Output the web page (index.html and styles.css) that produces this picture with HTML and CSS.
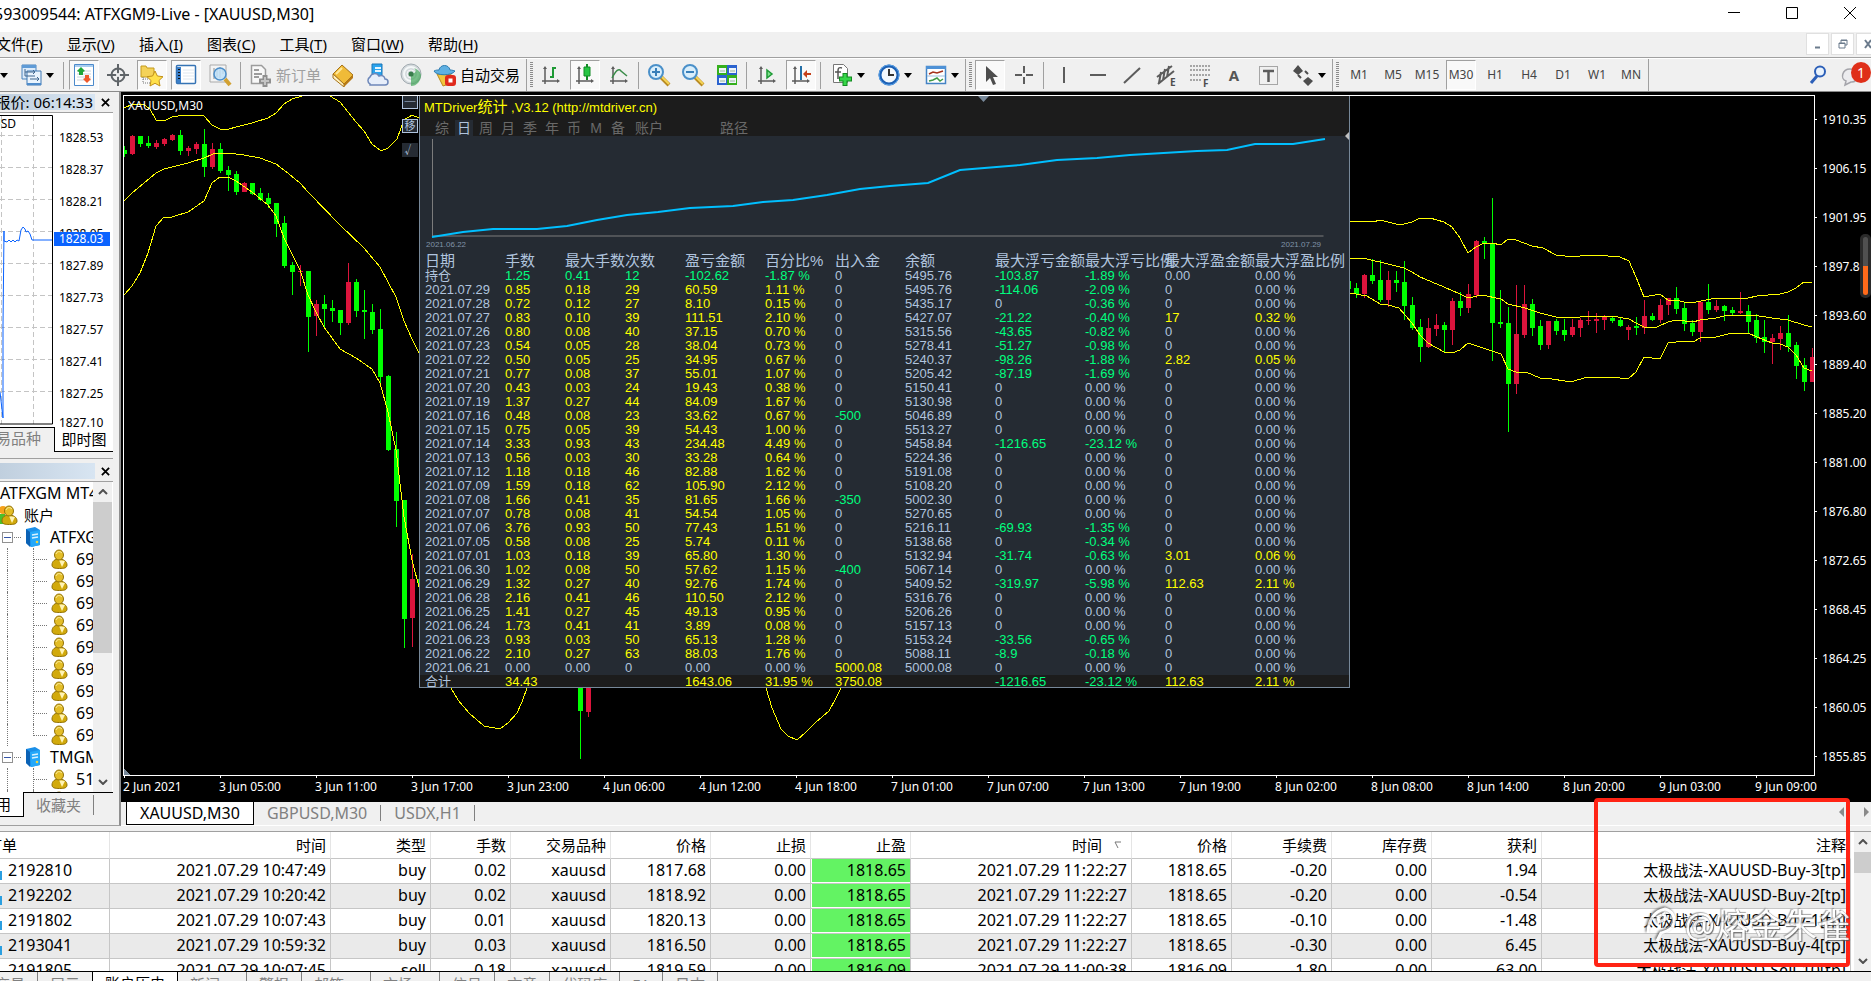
FILE: index.html
```html
<!DOCTYPE html>
<html lang="zh-CN">
<head>
    <meta charset="UTF-8">
    <meta name="viewport" content="width=device-width, initial-scale=1.0">
    <title>ATFXGM9-Live - [XAUUSD,M30]</title>
    <link rel="stylesheet" href="styles.css">
</head>
<body>
    <!-- shared icons -->
    <svg class="defs" aria-hidden="true">
        <symbol id="caret" viewBox="0 0 8 5"><path d="M0 0h8L4 5z"/></symbol>
        <symbol id="axes" viewBox="0 0 24 24">
            <path d="M6 5v16M3 18h16" stroke="#5c5c5c" stroke-width="1.500" fill="none"/>
            <path d="M4 6l2-3 2 3zM18 16l3 2-3 2z" fill="#5c5c5c"/>
        </symbol>
        <symbol id="user" viewBox="0 0 17 20">
            <path d="M1 16c0-4 3-6 7-6s8 2 8 6c0 3-3 3.500-7.500 3.500S1 19 1 16z" fill="#d2aa0b" stroke="#927207"/>
            <path d="M8 11l3 7 3-6z" fill="#fff3b5"/>
            <ellipse cx="8" cy="6" rx="4.500" ry="5" fill="#e3bd27" stroke="#927207"/>
            <path d="M5 5c1-3 4-3 6-1" stroke="#fff0a0" fill="none"/>
        </symbol>
        <symbol id="server" viewBox="0 0 16 20">
            <path d="M1 2l9-2 5 3v15l-9 2-5-4z" fill="#1b8fe8"/>
            <path d="M1 2l4 3v15l-4-4z" fill="#0b62b5"/>
            <path d="M5 5l10-2v15l-9 2z" fill="#25a8fa"/>
            <path d="M7 8l6-1M7 11l6-1" stroke="#d9f2ff" stroke-width="1.500"/>
            <circle cx="12" cy="15" r="1.300" fill="#f2d43c"/>
        </symbol>
    </svg>

    <header class="titlebar">
        <h1>593009544: ATFXGM9-Live - [XAUUSD,M30]</h1>
        <div class="window-buttons">
            <button aria-label="最小化"><svg viewBox="0 0 14 14"><path d="M1 6.500h12"/></svg></button>
            <button aria-label="最大化"><svg viewBox="0 0 14 14"><path d="M1.500 1.500h11v11h-11z"/></svg></button>
            <button aria-label="关闭"><svg viewBox="0 0 14 14"><path d="M1 1l12 12M13 1L1 13"/></svg></button>
        </div>
    </header>

    <nav class="menubar">
        <button>文件(<u>F</u>)</button>
        <button>显示(<u>V</u>)</button>
        <button>插入(<u>I</u>)</button>
        <button>图表(<u>C</u>)</button>
        <button>工具(<u>T</u>)</button>
        <button>窗口(<u>W</u>)</button>
        <button>帮助(<u>H</u>)</button>
        <div class="child-buttons">
            <button aria-label="最小化图表"><svg viewBox="0 0 12 12"><path d="M3 9.500h5" stroke-width="2"/></svg></button>
            <button aria-label="还原图表"><svg viewBox="0 0 12 12"><path d="M4 5V2h6v5H8M2 5h6v5H2zM4 2.500h6M2 5.500h6"/></svg></button>
            <button aria-label="关闭图表"><svg viewBox="0 0 12 12"><path d="M3 2l6 8M9 2l-6 8" stroke-width="2"/></svg></button>
        </div>
    </nav>

    <div class="toolbar">
        <div class="group main">
            <button class="only-caret" aria-label="新图表"><svg class="caret"><use href="#caret"/></svg></button>
            <button class="tool drop" aria-label="模板">
                <svg class="icon" viewBox="0 0 24 24"><path d="M3 2h14v14H3z" fill="#dcebfa" stroke="#4b84bd"/><path d="M3 2h14v3H3z" fill="#5f9bd6"/><path d="M8 8h14v14H8z" fill="#eaf4fd" stroke="#3f78b4"/><path d="M8 20h14v2H8z" fill="#4f8ccb"/><path d="M6 6v7h10M11 16h9M18 14l2 2-2 2M6 9h10M14 7l2 2-2 2" fill="none" stroke="#41678e"/></svg>
                <svg class="caret"><use href="#caret"/></svg>
            </button>
            <span class="sep"></span>
            <button class="tool on" aria-label="市场报价"><svg class="icon" viewBox="0 0 24 24"><path d="M2.500 1.500h19v21h-19z" fill="#fff" stroke="#4c8acb"/><path d="M3 2h18v2H3z" fill="#a9cdf0"/><path d="M5 8h14M5 11h14M5 14h14M5 17h14" stroke="#c9d4de"/><path d="M9 4l4 4-2 1v3H7V9L5 8z" fill="#1fa53a"/><path d="M15 20l-4-4 2-1v-3h4v3l2 1z" fill="#f0592a"/></svg></button>
            <button class="tool" aria-label="数据窗口"><svg class="icon" viewBox="0 0 24 24"><circle cx="12" cy="12" r="6.500" fill="none" stroke="#5f6468" stroke-width="2"/><path d="M12 1v22M1 12h22" stroke="#5f6468" stroke-width="2"/><circle cx="12" cy="12" r="2" fill="#efefef"/></svg></button>
            <button class="tool on" aria-label="导航"><svg class="icon" viewBox="0 0 24 24"><path d="M1 3h5l1 2h7v9H1z" fill="#f4d259" stroke="#c39a1d"/><path d="M3 14v6h7M3 16h5" stroke="#777" stroke-dasharray="1 1" fill="none"/><path d="M15 8l2.400 5 5.600.700-4 3.800 1 5.500-5-2.700-5 2.700 1-5.500-4-3.800 5.600-.700z" fill="#ffe04a" stroke="#c1901a"/></svg></button>
            <button class="tool on" aria-label="终端"><svg class="icon" viewBox="0 0 24 24"><rect x="2.500" y="2.500" width="19" height="18" rx="1" fill="#fff" stroke="#3674b5" stroke-width="1.500"/><path d="M3 4h4v16H3z" fill="#3b7fc9"/><path d="M5 6v12" stroke="#111" stroke-width="2" stroke-dasharray="1 2"/><path d="M9 7h11M9 10h11M9 13h11M9 16h11" stroke="#dfe7ee"/></svg></button>
            <button class="tool" aria-label="策略测试"><svg class="icon" viewBox="0 0 24 24"><path d="M2 2h16v17H2z" fill="#f4f4f4" stroke="#aaa"/><path d="M6 16V5M9 14V7M12 15V4M15 11V6" stroke="#8d8d8d"/><circle cx="12" cy="11" r="6" fill="#bfe0f8" fill-opacity=".85" stroke="#4d8fca" stroke-width="1.500"/><path d="M17 16l5 6" stroke="#d2a132" stroke-width="4"/></svg></button>
            <span class="sep"></span>
            <button class="tool text" disabled><svg class="icon" viewBox="0 0 24 24"><path d="M2.500 2.500h10l4 4v14h-14z" fill="#f8f8f8" stroke="#9c9c9c" stroke-width="1.500"/><path d="M5 7h5M5 11h8M5 14h5" stroke="#9c9c9c" stroke-width="2"/><path d="M16 12v12M10 18h12" stroke="#8f8f8f" stroke-width="5"/><path d="M16 14v8M12 18h8" stroke="#c4c4c4" stroke-width="2"/></svg>新订单</button>
            <button class="tool" aria-label="历史数据"><svg class="icon" viewBox="0 0 24 24"><path d="M2 11L11 2l11 10-9 9z" fill="#f0bb38" stroke="#a5721a"/><path d="M2 11l11 10v3L2 15z" fill="#fff0bd" stroke="#a5721a"/><path d="M13 21l9-9v3l-9 9z" fill="#b87a16"/><path d="M5 11l6-6" stroke="#ffe89a" stroke-width="2"/></svg></button>
            <button class="tool" aria-label="云端"><svg class="icon" viewBox="0 0 24 24"><path d="M7 1h10v14H7z" fill="#2aa4ee" stroke="#1b75b5"/><path d="M10 5h6M10 8h6" stroke="#e3f5ff" stroke-width="2"/><path d="M5 21a4 4 0 010-7 5 5 0 019-1 4 4 0 016 3 3 3 0 010 6H5z" fill="#e7eefa" stroke="#6d87b9" stroke-width="1.500"/></svg></button>
            <button class="tool" aria-label="信号"><svg class="icon" viewBox="0 0 24 24"><circle cx="12" cy="11" r="10" fill="#d3d9dc" stroke="#a2abb1"/><circle cx="12" cy="11" r="7" fill="none" stroke="#f4f7f8" stroke-width="2"/><circle cx="12" cy="11" r="4" fill="none" stroke="#f4f7f8"/><path d="M12 11v12c6 0 10-5 10-11-1-4-4-6-7-7 3 3 2 5-3 6z" fill="#43a65a" fill-opacity=".7"/><circle cx="12" cy="11" r="2.500" fill="#3a7d4d"/></svg></button>
            <button class="tool text"><svg class="icon" viewBox="0 0 24 24"><path d="M4 11h14l-2 10-6 2z" fill="#f2c53d" stroke="#bb8a1b"/><path d="M1 8c2 5 18 5 21 0-3-1-4-1-5-1-1-6-10-6-11 0-2 0-3 0-5 1z" fill="#5fb0e2" stroke="#2d7cb1"/><rect x="12" y="12" width="11" height="11" rx="3" fill="#e02a1c"/><path d="M15.500 15.500h4v4h-4z" fill="#fff"/></svg>自动交易</button>
        </div>
        <div class="group">
            <span class="grip"></span>
            <button class="tool" aria-label="柱状图"><svg class="icon" viewBox="0 0 24 24"><use href="#axes"/><path d="M11 14h3V5h3" fill="none" stroke="#1e9a35" stroke-width="2"/></svg></button>
            <button class="tool on" aria-label="阴阳烛"><svg class="icon" viewBox="0 0 24 24"><use href="#axes"/><path d="M14 1v16" stroke="#118a25" stroke-width="2"/><path d="M11 4h6v9h-6z" fill="#25c542" stroke="#118a25"/></svg></button>
            <button class="tool" aria-label="折线图"><svg class="icon" viewBox="0 0 24 24"><use href="#axes"/><path d="M5 15c4-8 7-10 9-7l6 5" fill="none" stroke="#3b8c4a" stroke-width="1.500"/></svg></button>
            <span class="sep"></span>
            <button class="tool" aria-label="放大"><svg class="icon" viewBox="0 0 24 24"><path d="M14 14l8 8" stroke="#b88a22" stroke-width="4"/><path d="M14 13l8 8" stroke="#f6d557" stroke-width="2"/><circle cx="9" cy="9" r="7" fill="#d9eefb" stroke="#4a90c9" stroke-width="2"/><path d="M9 5v8M5 9h8" stroke="#397fb9" stroke-width="2"/></svg></button>
            <button class="tool" aria-label="缩小"><svg class="icon" viewBox="0 0 24 24"><path d="M14 14l8 8" stroke="#b88a22" stroke-width="4"/><path d="M14 13l8 8" stroke="#f6d557" stroke-width="2"/><circle cx="9" cy="9" r="7" fill="#d9eefb" stroke="#4a90c9" stroke-width="2"/><path d="M5 9h8" stroke="#397fb9" stroke-width="2"/></svg></button>
            <button class="tool" aria-label="平铺窗口"><svg class="icon" viewBox="0 0 24 24"><path d="M2 2h10v10H2zM12 12h10v10H12z" fill="#35b01d"/><path d="M12 2h10v10H12zM2 12h10v10H2z" fill="#2b63cf"/><path d="M4 5h7v5H4zM14 5h7v5h-7zM4 15h7v5H4zM14 15h7v5h-7z" fill="#eef5fb"/><path d="M5 8h5M15 8h5M5 18h5M15 18h5" stroke="#9ab59b"/></svg></button>
            <span class="sep"></span>
            <button class="tool" aria-label="自动滚动"><svg class="icon" viewBox="0 0 24 24"><use href="#axes"/><path d="M12 7l5 4-5 4z" fill="#7fe08d" stroke="#1d9a35" stroke-width="1.500"/></svg></button>
            <button class="tool on" aria-label="图表平移"><svg class="icon" viewBox="0 0 24 24"><use href="#axes"/><path d="M12 3v14" stroke="#2470a8" stroke-width="2"/><path d="M14 11l4-4v3h4v2h-4v3z" fill="#c5401a"/></svg></button>
            <span class="sep"></span>
            <button class="tool drop" aria-label="指标"><svg class="icon" viewBox="0 0 24 24"><path d="M3.500 1.500h10l4 4v14h-14z" fill="#fff" stroke="#777"/><path d="M12 5c-3-1-4 0-4 3v8M5 9h6" fill="none" stroke="#555" stroke-width="1.500"/><path d="M15 10v13M9 16h13" stroke="#128a20" stroke-width="5"/><path d="M15 11v11M10 16h11" stroke="#35d648" stroke-width="3"/></svg><svg class="caret"><use href="#caret"/></svg></button>
            <button class="tool drop" aria-label="时段"><svg class="icon" viewBox="0 0 24 24"><circle cx="12" cy="12" r="9" fill="#f3f8fd" stroke="#1c60b4" stroke-width="3"/><circle cx="12" cy="12" r="10" fill="none" stroke="#5aa2e8"/><path d="M12 6v6h5" fill="none" stroke="#333" stroke-width="2"/></svg><svg class="caret"><use href="#caret"/></svg></button>
            <button class="tool drop" aria-label="模版"><svg class="icon" viewBox="0 0 24 24"><path d="M2.500 3.500h19v17h-19z" fill="#fff" stroke="#4483c4" stroke-width="1.500"/><path d="M2 3h20v3H2z" fill="#4e91d6"/><path d="M3 13h18" stroke="#9cbfe0"/><path d="M5 11l4-2 4 1 6-2" fill="none" stroke="#a5321c" stroke-width="1.500"/><path d="M5 18l4-1 4-2 3 3 3-2" fill="none" stroke="#3f9b45" stroke-width="1.500"/></svg><svg class="caret"><use href="#caret"/></svg></button>
        </div>
        <div class="group">
            <span class="grip"></span>
            <button class="tool on" aria-label="光标"><svg class="icon" viewBox="0 0 24 24"><path d="M8 3v16l4-4 3 7 3-1-3-7h5z" fill="#4d4d4d"/></svg></button>
            <button class="tool line" aria-label="十字光标"><svg class="icon" viewBox="0 0 24 24"><path d="M12 3v7M12 14v7M3 12h7M14 12h7"/></svg></button>
            <span class="sep"></span>
            <button class="tool line" aria-label="垂直线"><svg class="icon" viewBox="0 0 24 24"><path d="M12 4v16"/></svg></button>
            <button class="tool line" aria-label="水平线"><svg class="icon" viewBox="0 0 24 24"><path d="M4 12h16"/></svg></button>
            <button class="tool line" aria-label="趋势线"><svg class="icon" viewBox="0 0 24 24"><path d="M4 20L20 5"/></svg></button>
            <button class="tool line" aria-label="等距通道"><svg class="icon" viewBox="0 0 24 24"><path d="M3 14L18 3M4 21L20 8M7 9l-2 11M11 6L9 17M15 3l-2 11"/><text x="16" y="23">E</text></svg></button>
            <button class="tool line" aria-label="斐波那契"><svg class="icon" viewBox="0 0 24 24"><path d="M2 3h20M2 7h20M2 12h20M2 17h11" stroke-dasharray="2 1" stroke-width="1"/><text x="15" y="24">F</text></svg></button>
            <button class="tool letter" aria-label="文字">A</button>
            <button class="tool line" aria-label="文字标签"><svg class="icon" viewBox="0 0 24 24"><path d="M3.500 3.500h18v18h-18z" stroke-dasharray="1 1" stroke-width="1"/><path d="M7 8h11M12.500 8v11" stroke-width="2.500"/></svg></button>
            <button class="tool drop" aria-label="箭头"><svg class="icon" viewBox="0 0 24 24"><path d="M2 8l5-6 5 6-5 4zM12 18l5-4 5 4-5 5z" fill="#4d4d4d"/><path d="M7 12l3 3M14 8l3 3" stroke="#4d4d4d" stroke-width="2"/></svg><svg class="caret"><use href="#caret"/></svg></button>
        </div>
        <div class="group periods">
            <span class="grip"></span>
            <button class="tool">M1</button>
            <button class="tool">M5</button>
            <button class="tool">M15</button>
            <button class="tool on">M30</button>
            <button class="tool">H1</button>
            <button class="tool">H4</button>
            <button class="tool">D1</button>
            <button class="tool">W1</button>
            <button class="tool">MN</button>
        </div>
        <div class="toolbar-right">
            <button aria-label="搜索"><svg width="18" height="20" viewBox="0 0 18 20"><circle cx="11" cy="6.500" r="5" fill="#eaf3fc" stroke="#2c5fb8" stroke-width="2"/><path d="M8 11l-6 7" stroke="#2c5fb8" stroke-width="3"/></svg></button>
            <button class="chat" aria-label="消息"><svg width="26" height="26" viewBox="0 0 26 26"><path d="M9 7c-8 0-10 10-4 12l-1 4 6-3c8 1 10-13-1-13z" fill="#ececef" stroke="#a5a5ab" stroke-width="1.500"/></svg><span class="badge">1</span></button>
        </div>
    </div>

    <main class="workspace">
        <aside class="sidebar">
            <section class="dock watch">
                <header><h2>市场报价: 06:14:33</h2><button aria-label="关闭"><svg viewBox="0 0 10 10"><path d="M1 1l8 8M9 1L1 9"/></svg></button></header>
                <div class="tick">
                    <svg class="tick-chart" viewBox="0 0 54 314" preserveAspectRatio="none">
                        <path d="M1.500 3v308M33.500 3v308M0 22.500h53M0 54.500h53M0 86.500h53M0 118.500h53M0 150.500h53M0 182.500h53M0 214.500h53M0 246.500h53M0 278.500h53" class="grid"/>
                        <path d="M0 2.500h52.500v308.500H0" class="frame"/>
                        <path d="M0 279l3 26V212l1-94v10l3 1 2-2 2 2 2-2 2 2 2-2 2 1 2-11 2-3 2 2 1 3 2-1 2 3 2 6h20" class="price"/>
                        <text x="-8" y="15">USD</text>
                    </svg>
                    <ul class="tick-scale">
                        <li>1828.53</li><li>1828.37</li><li>1828.21</li><li>1828.05</li><li>1827.89</li>
                        <li>1827.73</li><li>1827.57</li><li>1827.41</li><li>1827.25</li><li>1827.10</li>
                    </ul>
                    <span class="tick-now">1828.03</span>
                </div>
                <div class="dock-tabs"><button class="first">交易品种</button><button class="active">即时图</button></div>
            </section>
            <section class="dock navigator">
                <header><h2>&nbsp;</h2><button aria-label="关闭"><svg viewBox="0 0 10 10"><path d="M1 1l8 8M9 1L1 9"/></svg></button></header>
                <div class="tree-box">
                    <ul class="tree">
                        <li>ATFXGM MT4</li>
                        <li class="accounts"><svg width="18" height="20" viewBox="0 0 18 20"><circle cx="3" cy="5" r="4" fill="#f5a21b"/><path d="M0 9h5v10H0z" fill="#4bc02c"/><use href="#user" x="1" width="17" height="20"/></svg>账户</li>
                        <li class="server"><i class="expander"></i><i class="dots"></i><svg width="16" height="20"><use href="#server"/></svg>ATFXG</li>
                        <li class="account"><i class="twig"></i><svg width="17" height="20"><use href="#user"/></svg>69</li>
                        <li class="account"><i class="twig"></i><svg width="17" height="20"><use href="#user"/></svg>69</li>
                        <li class="account"><i class="twig"></i><svg width="17" height="20"><use href="#user"/></svg>69</li>
                        <li class="account"><i class="twig"></i><svg width="17" height="20"><use href="#user"/></svg>69</li>
                        <li class="account"><i class="twig"></i><svg width="17" height="20"><use href="#user"/></svg>69</li>
                        <li class="account"><i class="twig"></i><svg width="17" height="20"><use href="#user"/></svg>69</li>
                        <li class="account"><i class="twig"></i><svg width="17" height="20"><use href="#user"/></svg>69</li>
                        <li class="account"><i class="twig"></i><svg width="17" height="20"><use href="#user"/></svg>69</li>
                        <li class="account"><i class="twig last"></i><svg width="17" height="20"><use href="#user"/></svg>69</li>
                        <li class="server"><i class="expander"></i><i class="dots"></i><svg width="16" height="20"><use href="#server"/></svg>TMGM</li>
                        <li class="account"><i class="twig"></i><svg width="17" height="20"><use href="#user"/></svg>51</li>
                        <li class="account"><i class="twig"></i><svg width="17" height="20"><use href="#user"/></svg></li>
                    </ul>
                    <div class="scrollbar">
                        <svg viewBox="0 0 10 6"><path d="M1 5l4-4 4 4"/></svg>
                        <span class="thumb"></span>
                        <svg viewBox="0 0 10 6"><path d="M1 1l4 4 4-4"/></svg>
                    </div>
                </div>
                <div class="dock-tabs nav-tabs"><button class="active">常用</button><button class="rest"><span>收藏夹</span></button></div>
            </section>
        </aside>

        <section class="charts">
            <div class="chart-window">
                <div class="plot">
                    <svg class="candles" id="candles" viewBox="0 0 1690 679" preserveAspectRatio="none"></svg>
                    <span class="symbol">XAUUSD,M30</span>
                    <div class="panel-buttons">
                        <button class="lit" aria-label="收起">─</button>
                        <button class="lit">移</button>
                        <button>√</button>
                    </div>

                    <div class="stats">
                        <div class="stats-head">
                            <h3>MTDriver<span>统计</span> ,V3.12 (http://mtdriver.cn)</h3>
                            <div class="stats-tabs">
                                <button>综</button><button class="active">日</button><button>周</button><button>月</button><button>季</button><button>年</button><button>币</button><button>M</button><button>备</button><button class="wide">账户</button><button class="path">路径</button>
                            </div>
                        </div>
                        <svg class="equity" viewBox="0 0 929 116" preserveAspectRatio="none">
                            <path d="M12.500 3v97h891" class="axis"/>
                            <path d="M12 101l31-5 30-3h44l30-3 30-6 30-5 31-3 32-4 43-2 30-4 30-2 34-5 33-6 30-3 38-3 32-13 60-5 37-5 40-2 33-3 67-4 30-1 28-6h38l32-5" class="curve"/>
                            <text x="6" y="111">2021.06.22</text>
                            <text x="861" y="111">2021.07.29</text>
                        </svg>
                        <table class="stats-table">
                            <colgroup><col class="w80"><col class="w60"><col class="w60"><col class="w60"><col class="w80"><col class="w70"><col class="w70"><col class="w90"><col class="w90"><col class="w80"><col class="w90"><col></colgroup>
                            <thead>
                                <tr><th>日期</th><th>手数</th><th>最大手数</th><th>次数</th><th>盈亏金额</th><th>百分比%</th><th>出入金</th><th>余额</th><th>最大浮亏金额</th><th>最大浮亏比例</th><th>最大浮盈金额</th><th>最大浮盈比例</th></tr>
                            </thead>
                            <tbody id="stats-rows"></tbody>
                        </table>
                        <svg class="mark-top" viewBox="0 0 11 6"><path d="M0 0h11L5.500 6z"/></svg>
                        <svg class="mark-side" viewBox="0 0 4 8"><path d="M4 0v8L0 4z"/></svg>
                    </div>
                </div>
                <ol class="price-axis">
                    <li>1910.35</li><li>1906.15</li><li>1901.95</li><li>1897.80</li><li>1893.60</li><li>1889.40</li><li>1885.20</li>
                    <li>1881.00</li><li>1876.80</li><li>1872.65</li><li>1868.45</li><li>1864.25</li><li>1860.05</li><li>1855.85</li>
                </ol>
                <ol class="time-axis">
                    <li>2 Jun 2021</li><li>3 Jun 05:00</li><li>3 Jun 11:00</li><li>3 Jun 17:00</li><li>3 Jun 23:00</li><li>4 Jun 06:00</li>
                    <li>4 Jun 12:00</li><li>4 Jun 18:00</li><li>7 Jun 01:00</li><li>7 Jun 07:00</li><li>7 Jun 13:00</li><li>7 Jun 19:00</li>
                    <li>8 Jun 02:00</li><li>8 Jun 08:00</li><li>8 Jun 14:00</li><li>8 Jun 20:00</li><li>9 Jun 03:00</li><li>9 Jun 09:00</li>
                </ol>
                <div class="float-bar"><span></span></div>
            </div>
            <div class="chart-tabs">
                <button class="active">XAUUSD,M30</button>
                <button>GBPUSD,M30</button>
                <button>USDX,H1</button>
                <div class="scroll-tabs">
                    <svg viewBox="0 0 6 10"><path d="M5 0v10L0 5z"/></svg>
                    <svg viewBox="0 0 6 10"><path d="M1 0v10l5-5z"/></svg>
                </div>
            </div>
        </section>
    </main>

    <section class="terminal">
        <table class="orders">
            <colgroup><col class="c-id"><col class="c-time"><col class="c-100"><col class="c-lots"><col class="c-100"><col class="c-100"><col class="c-100"><col class="c-100"><col class="c-time"><col class="c-100"><col class="c-100"><col class="c-100"><col class="c-profit"><col></colgroup>
            <thead>
                <tr><th class="id">订单</th><th>时间</th><th>类型</th><th>手数</th><th>交易品种</th><th>价格</th><th>止损</th><th>止盈</th><th>时间<svg class="sort" viewBox="0 0 8 8"><path d="M7 1H1l3 6"/></svg></th><th>价格</th><th>手续费</th><th>库存费</th><th>获利</th><th>注释</th></tr>
            </thead>
            <tbody id="order-rows"></tbody>
        </table>
        <div class="scrollbar">
            <svg viewBox="0 0 10 6"><path d="M1 5l4-4 4 4"/></svg>
            <span class="thumb"></span>
            <svg viewBox="0 0 10 6"><path d="M1 1l4 4 4-4"/></svg>
        </div>
    </section>

    <nav class="terminal-tabs">
        <button class="cut">交易</button><button>展示</button><button class="active">账户历史</button><button class="count">新闻</button><button>警报</button><button class="count">邮箱</button><button class="count">市场</button><button>信号</button><button>文章</button><button>代码库</button><button>EA</button><button>日志</button>
    </nav>

    <div class="marker"></div>
    <div class="watermark">
        <svg width="30" height="36" viewBox="0 0 30 36"><path d="M2 26C2 14 8 4 19 2c8 2 10 9 9 14-2 8-10 9-13 10l-4 8M12 10l6-3 2 5-7 3z"/></svg>
        @熔金朱雀
    </div>

    <script src="chart.js"></script>
</body>
</html>
```
FILE: styles.css
```css
* {
    box-sizing: border-box;
}
body {
    margin: 0;
    height: 100vh;
    display: flex;
    flex-direction: column;
    overflow: hidden;
    position: relative;
    background: #f0f0f0;
    color: #000;
    font: 15px/20px "Noto Sans", "Noto Sans CJK SC", sans-serif;
}
h1, h2, h3, ul, ol {
    margin: 0;
    padding: 0;
    font-weight: normal;
    list-style: none;
}
button {
    border: 0;
    padding: 0;
    background: none;
    font: inherit;
    color: inherit;
    white-space: nowrap;
}
svg {
    display: block;
    flex: none;
}
.defs {
    position: absolute;
    width: 0;
    height: 0;
}

/* title and menu */
.titlebar {
    flex: 0 0 32px;
    display: flex;
    justify-content: space-between;
    background: #fff;
}
.titlebar h1 {
    margin-left: -6px;
    font-size: 16px;
    line-height: 28px;
}
.window-buttons {
    display: flex;
    gap: 44px;
    padding: 6px 14px 0 0;
}
.window-buttons svg {
    width: 14px;
    height: 14px;
    fill: none;
    stroke: #000;
}
.window-buttons button {
    height: 14px;
}
.menubar {
    flex: 0 0 26px;
    display: flex;
    align-items: center;
    gap: 24px;
    margin-left: -4px;
    padding-bottom: 1px;
    border-bottom: 1px solid #a0a0a0;
}
.menubar u {
    text-underline-offset: 2px;
}
.child-buttons {
    margin-left: auto;
    margin-right: -8px;
    display: flex;
    gap: 2px;
}
.child-buttons button {
    width: 23px;
    height: 22px;
    display: grid;
    place-items: center;
    background: #fff;
    border: 1px solid #e0e0e0;
}
.child-buttons svg {
    width: 12px;
    height: 12px;
    fill: none;
    stroke: #6b7b8c;
}

/* toolbar */
.toolbar {
    flex: 0 0 34px;
    display: flex;
    border-top: 1px solid #fff;
    border-bottom: 1px solid #8a8a8a;
}
.group {
    display: flex;
    align-items: center;
    border-right: 1px solid #a0a0a0;
}
.grip {
    width: 3px;
    height: 26px;
    margin: 0 1px 0 3px;
    background: repeating-linear-gradient(#8c8c8c 0 1px, #f0f0f0 1px 2px);
}
.sep {
    width: 1px;
    height: 27px;
    margin: 0 3px 0 2px;
    background: #a0a0a0;
}
.main {
    padding-right: 1px;
}
.main .sep {
    margin-left: 3px;
}
.tool {
    width: 30px;
    height: 30px;
    margin: 0 2px;
    display: flex;
    align-items: center;
    justify-content: center;
    gap: 3px;
}
.tool.drop {
    width: 43px;
}
.tool.text {
    width: auto;
    padding: 0 3px;
}
.tool:disabled {
    color: #a0a0a0;
}
.tool.on {
    background: #f9f9f9;
    border: 1px solid #fff;
    border-top-color: #a0a0a0;
    border-left-color: #a0a0a0;
}
.icon {
    width: 24px;
    height: 24px;
}
.caret {
    width: 8px;
    height: 5px;
}
.only-caret {
    width: 13px;
}
.line .icon {
    stroke: #5c5c5c;
    stroke-width: 2px;
    fill: none;
}
.line text {
    font-size: 10px;
    font-weight: bold;
    fill: #4d4d4d;
    stroke: none;
}
.letter {
    font-weight: bold;
    color: #555;
}
.periods .grip {
    margin-right: 3px;
}
.periods .tool {
    font-size: 12px;
    color: #444;
}
.toolbar-right {
    margin-left: auto;
    display: flex;
    align-items: center;
    gap: 14px;
}
.chat {
    position: relative;
    width: 30px;
}
.badge {
    position: absolute;
    top: 0;
    right: 0;
    width: 20px;
    height: 21px;
    border-radius: 50%;
    background: #df2f19;
    color: #fff;
    font-size: 14px;
    line-height: 21px;
}

/* left docks */
.workspace {
    flex: 1;
    min-height: 0;
    display: flex;
}
.sidebar {
    flex: 0 0 121px;
    min-width: 0;
    display: flex;
    flex-direction: column;
    margin-bottom: 5px;
    padding-right: 6px;
    border-right: 2px solid #8f8f8f;
    border-bottom: 1px solid #a0a0a0;
}
.dock {
    display: flex;
    flex-direction: column;
    overflow: hidden;
}
.watch {
    flex: 0 0 367px;
    border-bottom: 1px solid #a0a0a0;
}
.navigator {
    flex: 1;
    padding-top: 2px;
}
.dock header {
    flex: 0 0 21px;
    display: flex;
    justify-content: space-between;
    align-items: center;
    padding-right: 3px;
    border-bottom: 1px solid #a0a0a0;
}
.dock header h2 {
    flex: none;
    width: 95px;
    height: 16px;
    display: flex;
    align-items: center;
    justify-content: flex-end;
    padding-right: 2px;
    background: linear-gradient(90deg, #c0cfde, #d8e5f2);
    font-size: 15px;
    white-space: nowrap;
}
.dock header svg {
    width: 9px;
    height: 9px;
    stroke: #000;
    stroke-width: 2px;
}
.tick {
    flex: none;
    height: 314px;
    display: flex;
    position: relative;
    background: #fff;
    font-size: 12px;
}
.tick-chart {
    width: 54px;
    height: 314px;
}
.tick-chart .grid {
    stroke: #c4c4c4;
    stroke-dasharray: 5 3;
}
.tick-chart .frame {
    fill: none;
    stroke: #000;
}
.tick-chart .price {
    fill: none;
    stroke: #0a63ff;
}
.tick-scale {
    padding: 9px 0 0 5px;
}
.tick-scale li {
    height: 32px;
    line-height: 32px;
}
.tick-scale li:last-child {
    height: 17px;
    line-height: 26px;
}
.tick-now {
    position: absolute;
    left: 54px;
    top: 119px;
    width: 56px;
    height: 14px;
    padding-left: 5px;
    background: #0a63ff;
    color: #fff;
    line-height: 14px;
}
.dock-tabs {
    display: flex;
    height: 25px;
}
.dock-tabs button {
    color: #808080;
}
.watch .first {
    flex: none;
    width: 54px;
    border-top: 1px solid #000;
    padding-right: 13px;
    display: flex;
    justify-content: flex-end;
}
.dock-tabs .active {
    background: #fff;
    color: #000;
}
.watch .active {
    flex: 1;
    border-left: 1px solid #000;
    border-bottom: 1px solid #000;
}
.tree-box {
    flex: 1;
    min-height: 0;
    display: flex;
    background: #fff;
}
.tree {
    flex: 1;
    min-width: 0;
    overflow: hidden;
    font-size: 16px;
}
.tree li {
    height: 22px;
    display: flex;
    align-items: center;
    white-space: nowrap;
}
.accounts {
    gap: 6px;
    font-size: 15px;
}
.expander {
    flex: none;
    width: 11px;
    height: 11px;
    margin-left: 2px;
    border: 1px solid #919191;
    background: linear-gradient(#3556a8, #3556a8) 50% 50% / 7px 1px no-repeat;
}
.dots {
    flex: none;
    width: 7px;
    height: 1px;
    margin: 0 4px 0 1px;
    background: repeating-linear-gradient(90deg, #777 0 1px, transparent 1px 2px);
}
.server svg {
    margin-right: 9px;
}
.account {
    margin-left: 7px;
    padding-left: 25px;
    border-left: 1px dotted #777;
}
.twig {
    flex: none;
    width: 15px;
    height: 22px;
    margin-right: 3px;
    border-left: 1px dotted #777;
    background: repeating-linear-gradient(90deg, #777 0 1px, transparent 1px 2px) 0 11px / 100% 1px no-repeat;
}
.twig.last {
    height: 12px;
    align-self: flex-start;
}
.account svg {
    margin-right: 8px;
}
.scrollbar {
    flex: 0 0 19px;
    display: flex;
    flex-direction: column;
    align-items: center;
    padding: 7px 0;
    background: #f0f0f0;
}
.scrollbar svg {
    width: 10px;
    height: 6px;
    fill: none;
    stroke: #505050;
    stroke-width: 2px;
}
.scrollbar .thumb {
    width: 100%;
    height: 151px;
    margin: 7px 0 auto;
    background: #cdcdcd;
}
.tree-box .scrollbar {
    margin-right: 1px;
}
.nav-tabs {
    flex: 0 0 33px;
    padding-bottom: 8px;
}
.nav-tabs .active {
    flex: none;
    width: 24px;
    display: flex;
    justify-content: flex-end;
    align-items: center;
    padding-right: 12px;
    border-right: 1px solid #000;
    border-bottom: 1px solid #000;
}
.nav-tabs .rest {
    flex: 1;
    display: flex;
    align-items: center;
    border-top: 1px solid #000;
}
.nav-tabs .rest span {
    padding: 0 12px;
    border-right: 1px solid #808080;
}

/* chart */
.charts {
    flex: 1;
    min-width: 0;
    display: flex;
    flex-direction: column;
    padding-bottom: 5px;
}
.chart-window {
    flex: 1;
    min-height: 0;
    position: relative;
    display: grid;
    grid-template: minmax(0, 1fr) 24px / minmax(0, 1fr) 56px;
    padding: 3px 0 0 2px;
    background: #000;
    color: #fff;
    font-size: 12px;
}
.plot {
    position: relative;
    overflow: hidden;
    border: 1px solid #fff;
}
.candles {
    width: 100%;
    height: 100%;
    shape-rendering: crispEdges;
}
.bull {
    fill: #dc143c;
}
.bear {
    fill: #00ff00;
}
.band {
    fill: none;
    stroke: #ffff00;
}
.symbol {
    position: absolute;
    left: 4px;
    top: 0;
}
.panel-buttons {
    position: absolute;
    left: 278px;
    top: -1px;
    display: flex;
    flex-direction: column;
    gap: 10px;
}
.panel-buttons button {
    width: 16px;
    height: 14px;
    overflow: hidden;
    background: #252b33;
    border: 1px solid #252b33;
    font-size: 11px;
    line-height: 10px;
    color: #b0c4de;
}
.panel-buttons .lit {
    border-color: #b0c4de;
}
.price-axis {
    height: 0;
}
.price-axis li {
    display: flex;
    align-items: center;
    height: 49px;
    gap: 5px;
}
.price-axis li::before {
    content: "";
    width: 2px;
    height: 1px;
    background: #fff;
}
.time-axis {
    grid-column: 1 / 3;
    display: flex;
    overflow: hidden;
}
.time-axis li {
    flex: 0 0 96px;
    line-height: 18px;
    white-space: nowrap;
}
.time-axis li::before {
    content: "";
    display: block;
    width: 1px;
    height: 2px;
    margin-left: 1px;
    background: #fff;
}
.float-bar {
    position: absolute;
    right: 0;
    top: 142px;
    width: 11px;
    height: 64px;
    padding: 3px;
    border-radius: 5px;
    background: #2b2b2b;
}
.float-bar span {
    display: block;
    height: 58px;
    border-radius: 3px;
    background: linear-gradient(#505050 50%, #ff6a1a 50%);
}

/* statistics overlay */
.stats {
    position: absolute;
    left: 295px;
    top: 0;
    width: 931px;
    height: 592px;
    overflow: hidden;
    background: #252b33;
    border: 1px solid #778899;
    border-top: 0;
    color: #b0c4de;
    font: 13px/14px "Liberation Sans", "Noto Sans CJK SC", sans-serif;
}
.stats-head {
    height: 40px;
    background: #1c1c1c;
}
.stats h3 {
    padding: 1px 0 0 4px;
    font-size: 13px;
    line-height: 20px;
    color: #ffff00;
}
.stats h3 span {
    font-size: 15px;
}
.stats-tabs {
    display: flex;
    padding: 2px 0 0 11px;
}
.stats-tabs button {
    width: 22px;
    height: 16px;
    font-size: 14px;
    line-height: 16px;
    color: #696969;
}
.stats-tabs .active {
    width: 18px;
    margin: 0 2px;
    background: #252b33;
    color: #b0c4de;
}
.stats-tabs .wide {
    width: 34px;
    margin-left: 3px;
}
.stats-tabs .path {
    width: 34px;
    margin-left: 51px;
}
.equity {
    width: 100%;
    height: 116px;
}
.equity .axis {
    fill: none;
    stroke: #7c7c7c;
}
.equity .curve {
    fill: none;
    stroke: #00bfff;
    stroke-width: 2px;
}
.equity text {
    font-size: 8px;
    fill: #8093a8;
}
.stats-table {
    width: 100%;
    table-layout: fixed;
    border-collapse: collapse;
}
.stats-table th,
.stats-table td {
    height: 14px;
    padding: 0 0 0 5px;
    text-align: left;
    vertical-align: middle;
    font-weight: normal;
    line-height: 14px;
    white-space: nowrap;
}
.stats-table th {
    height: 17px;
    font-size: 15px;
    line-height: 17px;
}
.stats-table .gain {
    color: #ffff00;
}
.stats-table .loss {
    color: #00ff7f;
}
.stats-table .total td {
    background: #1c1c1c;
}
.w60 { width: 60px; }
.w70 { width: 70px; }
.w80 { width: 80px; }
.w90 { width: 90px; }
.mark-top {
    position: absolute;
    left: 558px;
    top: 0;
    width: 11px;
    height: 6px;
    fill: #778899;
}
.mark-side {
    position: absolute;
    right: 0;
    top: 36px;
    width: 4px;
    height: 8px;
    fill: #c0c0c0;
}

/* chart tabs */
.chart-tabs {
    flex: 0 0 26px;
    display: flex;
    align-items: stretch;
    padding-left: 5px;
    border-top: 2px solid #000;
    border-bottom: 1px solid #fff;
    font-size: 16px;
}
.chart-tabs button {
    margin: 3px 0 4px;
    padding: 0 13px;
    border-right: 1px solid #808080;
    line-height: 16px;
    color: #808080;
}
.chart-tabs .active {
    margin: 0;
    border: 1px solid #000;
    border-top: 0;
    background: #fff;
    color: #000;
}
.scroll-tabs {
    margin: 5px 2px 0 auto;
    display: flex;
    gap: 18px;
}
.scroll-tabs svg {
    width: 6px;
    height: 10px;
    fill: #8a8a8a;
}

/* order history */
.terminal {
    flex: 0 0 140px;
    display: flex;
    overflow: hidden;
    border-top: 1px solid #a0a0a0;
    background: #fff;
}
.orders {
    flex: 1;
    table-layout: fixed;
    border-collapse: separate;
    border-spacing: 0;
    width: 100%;
    margin-right: 3px;
    align-self: flex-start;
}
.orders th,
.orders td {
    padding: 0 4px;
    text-align: right;
    white-space: nowrap;
    border-right: 1px solid #c6c6c6;
    border-bottom: 1px solid #c6c6c6;
}
.orders th {
    height: 27px;
    font-weight: normal;
    border-right-color: #e5e5e5;
}
.orders td {
    height: 25px;
    font-size: 16px;
    line-height: 22px;
    padding-bottom: 2px;
}
.orders th.id {
    text-align: left;
    text-indent: -17px;
    overflow: hidden;
}
.orders td.id {
    text-align: left;
    padding-left: 8px;
    background: linear-gradient(#2b9fe0, #2b9fe0) 0 80% / 2px 9px no-repeat;
}
.orders tr:nth-child(even) td {
    background-color: #eaeaea;
}
.orders tbody .tp {
    background-color: #63f363;
    box-shadow: inset 1px -1px #fff;
}
.orders tbody tr:nth-child(even) .tp {
    background-color: #63f363;
}
.cn {
    font-size: 15px;
}
.sort {
    display: inline-block;
    width: 8px;
    height: 8px;
    margin: 0 5px 2px 12px;
    fill: none;
    stroke: #777;
}
.c-id { width: 110px; }
.c-time { width: 221px; }
.c-100 { width: 100px; }
.c-lots { width: 80px; }
.c-profit { width: 110px; }
.terminal .scrollbar {
    flex-basis: 17px;
}
.terminal .thumb {
    height: 21px;
}

.terminal-tabs {
    flex: 0 0 10px;
    display: flex;
    align-items: flex-start;
    overflow: hidden;
    border-top: 1px solid #000;
    color: #808080;
}
.terminal-tabs button {
    flex: none;
    height: 24px;
    padding: 0 12px;
    border-right: 1px solid #808080;
    line-height: 20px;
}
.terminal-tabs .cut {
    margin-left: -17px;
}
.terminal-tabs .active {
    margin: -1px 0 0 -1px;
    border-left: 1px solid #000;
    border-right: 1px solid #000;
    background: #fff;
    color: #000;
}
.terminal-tabs .count {
    padding-right: 26px;
}

/* highlight frame and signature */
.marker {
    position: absolute;
    right: 21px;
    bottom: 14px;
    width: 256px;
    height: 169px;
    border: 4px solid #ff2415;
    border-radius: 4px;
}
.watermark {
    position: absolute;
    right: 20px;
    bottom: 36px;
    display: flex;
    align-items: center;
    gap: 8px;
    font-size: 34px;
    line-height: 40px;
    color: #fff;
    text-shadow: 1px 1px 1px #555, -1px -1px 1px #999;
    opacity: 0.85;
}
.watermark svg {
    fill: none;
    stroke: #fff;
    stroke-width: 3px;
    filter: drop-shadow(-1px -1px 1px #555);
}
```
FILE: chart.js
```js
// slot, colour, high, body top, body bottom, low
const candles = [
    [0,'g',50,54,58,61],[1,'r',39,40,58,59],[2,'g',40,40,48,51],[3,'g',40,47,50,52],[4,'r',44,47,51,53],[5,'r',42,43,48,50],
    [6,'r',38,39,44,45],[7,'g',34,39,55,59],[8,'r',50,52,55,60],[9,'r',46,48,53,58],[10,'g',33,48,71,81],[11,'r',47,53,71,73],
    [12,'g',47,53,75,77],[13,'g',70,74,79,95],[14,'g',75,78,96,99],[15,'r',86,87,96,96],[16,'g',87,87,98,99],[17,'g',92,97,104,105],
    [18,'g',97,102,108,112],[19,'g',107,107,128,141],[20,'g',120,127,170,172],[21,'g',166,169,176,199],[22,'r',169,175,176,190],
    [23,'g',175,175,221,256],[24,'r',204,208,220,240],[25,'g',199,208,213,231],[26,'g',204,212,215,226],[27,'g',214,214,227,239],
    [28,'r',167,186,227,229],[29,'g',183,186,215,221],[30,'g',194,214,216,243],[31,'g',208,216,234,238],[32,'g',213,233,281,289],
    [33,'g',279,280,354,355],[34,'g',336,353,405,431],[35,'g',404,404,523,552],[36,'r',458,483,522,551],[37,'g',480,483,487,487],
    [57,'g',560,570,615,663],[58,'r',560,570,616,621],
    [153,'g',185,185,193,193],[154,'g',187,192,198,202],[155,'r',178,179,198,202],[156,'g',163,179,185,188],[157,'g',164,184,204,206],
    [158,'r',175,184,204,211],[159,'g',175,184,187,196],[160,'g',165,186,210,224],[161,'g',201,209,232,234],[162,'g',223,231,251,266],
    [163,'r',222,232,251,252],[164,'r',218,229,233,240],[165,'g',226,229,234,256],[166,'r',202,205,234,249],[167,'g',196,205,212,220],
    [168,'r',188,198,212,217],[169,'r',144,145,199,202],[170,'g',141,145,148,163],[171,'g',102,147,227,265],[172,'g',194,226,228,232],
    [173,'g',211,227,288,336],[174,'r',189,238,288,298],[175,'r',189,208,239,242],[176,'g',203,208,232,240],[177,'g',224,230,249,254],
    [178,'r',225,225,249,253],[179,'g',223,225,235,239],[180,'g',223,234,239,245],[181,'r',223,231,239,241],[182,'r',222,224,232,241],
    [183,'r',215,224,225,229],[184,'r',217,223,225,237],[185,'r',219,221,224,234],[186,'g',220,222,225,227],[187,'g',221,224,230,231],
    [188,'r',229,231,234,244],[189,'g',221,230,232,239],[190,'r',204,220,232,238],[191,'g',217,220,224,225],[192,'r',203,209,224,227],
    [193,'r',202,202,209,219],[194,'g',191,202,213,218],[195,'g',207,212,228,235],[196,'g',224,227,236,240],[197,'r',205,206,236,246],
    [198,'g',188,206,214,218],[199,'r',204,210,214,216],[200,'g',209,210,215,225],[201,'g',211,214,217,220],[202,'r',196,215,217,218],
    [203,'g',209,215,226,237],[204,'g',218,224,242,247],[205,'g',224,241,246,257],[206,'r',238,242,246,268],[207,'r',230,237,243,254],
    [208,'g',219,237,251,256],[209,'g',246,249,270,283],[210,'g',262,269,286,295],[211,'r',252,261,286,286]
];

// Bollinger bands, in the stretches that stay visible
const bands = [
    '0,12 9,8 19,8 26,13 32,24 40,25 48,21 61,19 80,20 88,29 96,33 105,33 112,31 128,27 144,22 152,17 160,8 168,3 178,0',
    '206,0 216,6 224,16 232,26 240,35 248,48 257,55 264,52 273,43 280,24 288,19 295,22',
    '0,105 8,97 32,77 40,73 64,67 80,62 89,58 104,57 120,59 136,62 152,68 160,74 176,87 184,96 216,129 240,152 256,171 272,201 280,225 288,243 295,257',
    '0,199 8,190 16,177 24,157 32,130 40,121 48,121 64,116 80,105 88,87 96,81 104,81 112,85 128,96 144,109 152,120 160,142 176,174 184,199 192,216 200,231 216,253 232,262 248,273 256,287 264,316 272,354 280,421 288,464 295,491',
    '327,592 334,604 345,617 360,630 376,633 384,627 393,617 398,606 403,592',
    '642,592 648,612 657,633 664,640 673,644 682,636 692,626 705,615 712,602 717,592',
    '1226,126 1245,125 1249,126 1256,124 1272,128 1280,128 1288,126 1296,122 1306,122 1320,126 1328,131 1336,142 1344,157 1352,151 1360,147 1368,147 1377,149 1384,143 1392,144 1408,150 1419,152 1432,159 1441,160 1456,160 1472,159 1496,161 1505,165 1512,181 1520,201 1536,198 1544,204 1552,204 1560,206 1572,206 1592,202 1624,202 1633,200 1656,198 1664,196 1672,192 1680,186 1688,186',
    '1226,162 1243,163 1264,168 1280,172 1288,176 1296,181 1320,191 1336,198 1344,202 1358,199 1377,203 1384,208 1401,212 1416,217 1432,221 1448,222 1465,220 1488,220 1505,223 1512,227 1520,231 1533,231 1544,226 1552,224 1569,226 1576,224 1592,222 1600,220 1616,219 1629,219 1648,222 1664,224 1680,229 1688,231',
    '1226,197 1243,200 1256,208 1264,209 1275,212 1288,227 1296,239 1304,247 1320,256 1328,257 1336,254 1344,247 1368,255 1377,258 1384,273 1392,276 1402,276 1416,282 1428,283 1441,285 1450,285 1460,282 1482,281 1496,282 1505,282 1512,276 1520,261 1536,263 1544,247 1560,245 1569,246 1576,242 1592,241 1608,237 1624,237 1633,241 1648,247 1656,248 1664,251 1672,259 1680,272 1688,275'
];

let shapes = '';
candles.forEach(([slot, colour, high, top, bottom, low]) => {
    const x = slot * 8;
    const cls = colour === 'r' ? 'bull' : 'bear';
    shapes += `<rect class="${cls}" x="${x}" y="${high}" width="1" height="${Math.max(low - high, 1)}"/>`;
    shapes += `<rect class="${cls}" x="${x - 2}" y="${top}" width="5" height="${Math.max(bottom - top, 1)}"/>`;
});
bands.forEach(points => {
    shapes += `<polyline class="band" points="${points}"/>`;
});
shapes += '<path d="M0 673v6h6z" fill="#778899"/>';
document.getElementById('candles').innerHTML = shapes;

// date, lots, max lots, trades, profit, percent, deposit, balance, drawdown, dd %, run-up, ru %
const stats = [
    '持仓|1.25|0.41|12|-102.62|-1.87|0|5495.76|-103.87|-1.89|0.00|0.00',
    '2021.07.29|0.85|0.18|29|60.59|1.11|0|5495.76|-114.06|-2.09|0|0.00',
    '2021.07.28|0.72|0.12|27|8.10|0.15|0|5435.17|0|-0.36|0|0.00',
    '2021.07.27|0.83|0.10|39|111.51|2.10|0|5427.07|-21.22|-0.40|17|0.32',
    '2021.07.26|0.80|0.08|40|37.15|0.70|0|5315.56|-43.65|-0.82|0|0.00',
    '2021.07.23|0.54|0.05|28|38.04|0.73|0|5278.41|-51.27|-0.98|0|0.00',
    '2021.07.22|0.50|0.05|25|34.95|0.67|0|5240.37|-98.26|-1.88|2.82|0.05',
    '2021.07.21|0.77|0.08|37|55.01|1.07|0|5205.42|-87.19|-1.69|0|0.00',
    '2021.07.20|0.43|0.03|24|19.43|0.38|0|5150.41|0|0.00|0|0.00',
    '2021.07.19|1.37|0.27|44|84.09|1.67|0|5130.98|0|0.00|0|0.00',
    '2021.07.16|0.48|0.08|23|33.62|0.67|-500|5046.89|0|0.00|0|0.00',
    '2021.07.15|0.75|0.05|39|54.43|1.00|0|5513.27|0|0.00|0|0.00',
    '2021.07.14|3.33|0.93|43|234.48|4.49|0|5458.84|-1216.65|-23.12|0|0.00',
    '2021.07.13|0.56|0.03|30|33.28|0.64|0|5224.36|0|0.00|0|0.00',
    '2021.07.12|1.18|0.18|46|82.88|1.62|0|5191.08|0|0.00|0|0.00',
    '2021.07.09|1.59|0.18|62|105.90|2.12|0|5108.20|0|0.00|0|0.00',
    '2021.07.08|1.66|0.41|35|81.65|1.66|-350|5002.30|0|0.00|0|0.00',
    '2021.07.07|0.78|0.08|41|54.54|1.05|0|5270.65|0|0.00|0|0.00',
    '2021.07.06|3.76|0.93|50|77.43|1.51|0|5216.11|-69.93|-1.35|0|0.00',
    '2021.07.05|0.58|0.08|25|5.74|0.11|0|5138.68|0|-0.34|0|0.00',
    '2021.07.01|1.03|0.18|39|65.80|1.30|0|5132.94|-31.74|-0.63|3.01|0.06',
    '2021.06.30|1.02|0.08|50|57.62|1.15|-400|5067.14|0|0.00|0|0.00',
    '2021.06.29|1.32|0.27|40|92.76|1.74|0|5409.52|-319.97|-5.98|112.63|2.11',
    '2021.06.28|2.16|0.41|46|110.50|2.12|0|5316.76|0|0.00|0|0.00',
    '2021.06.25|1.41|0.27|45|49.13|0.95|0|5206.26|0|0.00|0|0.00',
    '2021.06.24|1.73|0.41|41|3.89|0.08|0|5157.13|0|0.00|0|0.00',
    '2021.06.23|0.93|0.03|50|65.13|1.28|0|5153.24|-33.56|-0.65|0|0.00',
    '2021.06.22|2.10|0.27|63|88.03|1.76|0|5088.11|-8.9|-0.18|0|0.00',
    '2021.06.21|0.00|0.00|0|0.00|0.00|5000.08|5000.08|0|0.00|0|0.00',
    '合计|34.43|||1643.06|31.95|3750.08||-1216.65|-23.12|112.63|2.11'
];

function signClass(value) {
    if (value > 0) return 'gain';
    if (value < 0) return 'loss';
    return '';
}

document.getElementById('stats-rows').innerHTML = stats.map((line, n) => {
    const cells = line.split('|');
    const tds = cells.map((text, i) => {
        let cls = '';
        if (i >= 1 && i <= 3) cls = signClass(cells[4]);
        else if (i > 3 && i !== 7) cls = signClass(text);
        const unit = [5, 9, 11].includes(i) ? ' %' : '';
        return `<td class="${cls}">${text}${unit}</td>`;
    }).join('');
    return `<tr class="${n === stats.length - 1 ? 'total' : ''}">${tds}</tr>`;
}).join('');

const orders = [
    ['2192810', '2021.07.29 10:47:49', 'buy', '0.02', 'xauusd', '1817.68', '0.00', '1818.65', '2021.07.29 11:22:27', '1818.65', '-0.20', '0.00', '1.94', '-XAUUSD-Buy-3[tp]'],
    ['2192202', '2021.07.29 10:20:42', 'buy', '0.02', 'xauusd', '1818.92', '0.00', '1818.65', '2021.07.29 11:22:27', '1818.65', '-0.20', '0.00', '-0.54', '-XAUUSD-Buy-2[tp]'],
    ['2191802', '2021.07.29 10:07:43', 'buy', '0.01', 'xauusd', '1820.13', '0.00', '1818.65', '2021.07.29 11:22:27', '1818.65', '-0.10', '0.00', '-1.48', '-XAUUSD-Buy-1[tp]'],
    ['2193041', '2021.07.29 10:59:32', 'buy', '0.03', 'xauusd', '1816.50', '0.00', '1818.65', '2021.07.29 11:22:27', '1818.65', '-0.30', '0.00', '6.45', '-XAUUSD-Buy-4[tp]'],
    ['2191805', '2021.07.29 10:07:45', 'sell', '0.18', 'xauusd', '1819.59', '0.00', '1816.09', '2021.07.29 11:00:38', '1816.09', '-1.80', '0.00', '63.00', '-XAUUSD-Sell-10[tp]']
];

document.getElementById('order-rows').innerHTML = orders.map(order => {
    return '<tr>' + order.map((text, i) => {
        if (i === 0) return `<td class="id">${text}</td>`;
        if (i === 7) return `<td class="tp">${text}</td>`;
        if (i === 13) return `<td><span class="cn">太极战法</span>${text}</td>`;
        return `<td>${text}</td>`;
    }).join('') + '</tr>';
}).join('');
```
